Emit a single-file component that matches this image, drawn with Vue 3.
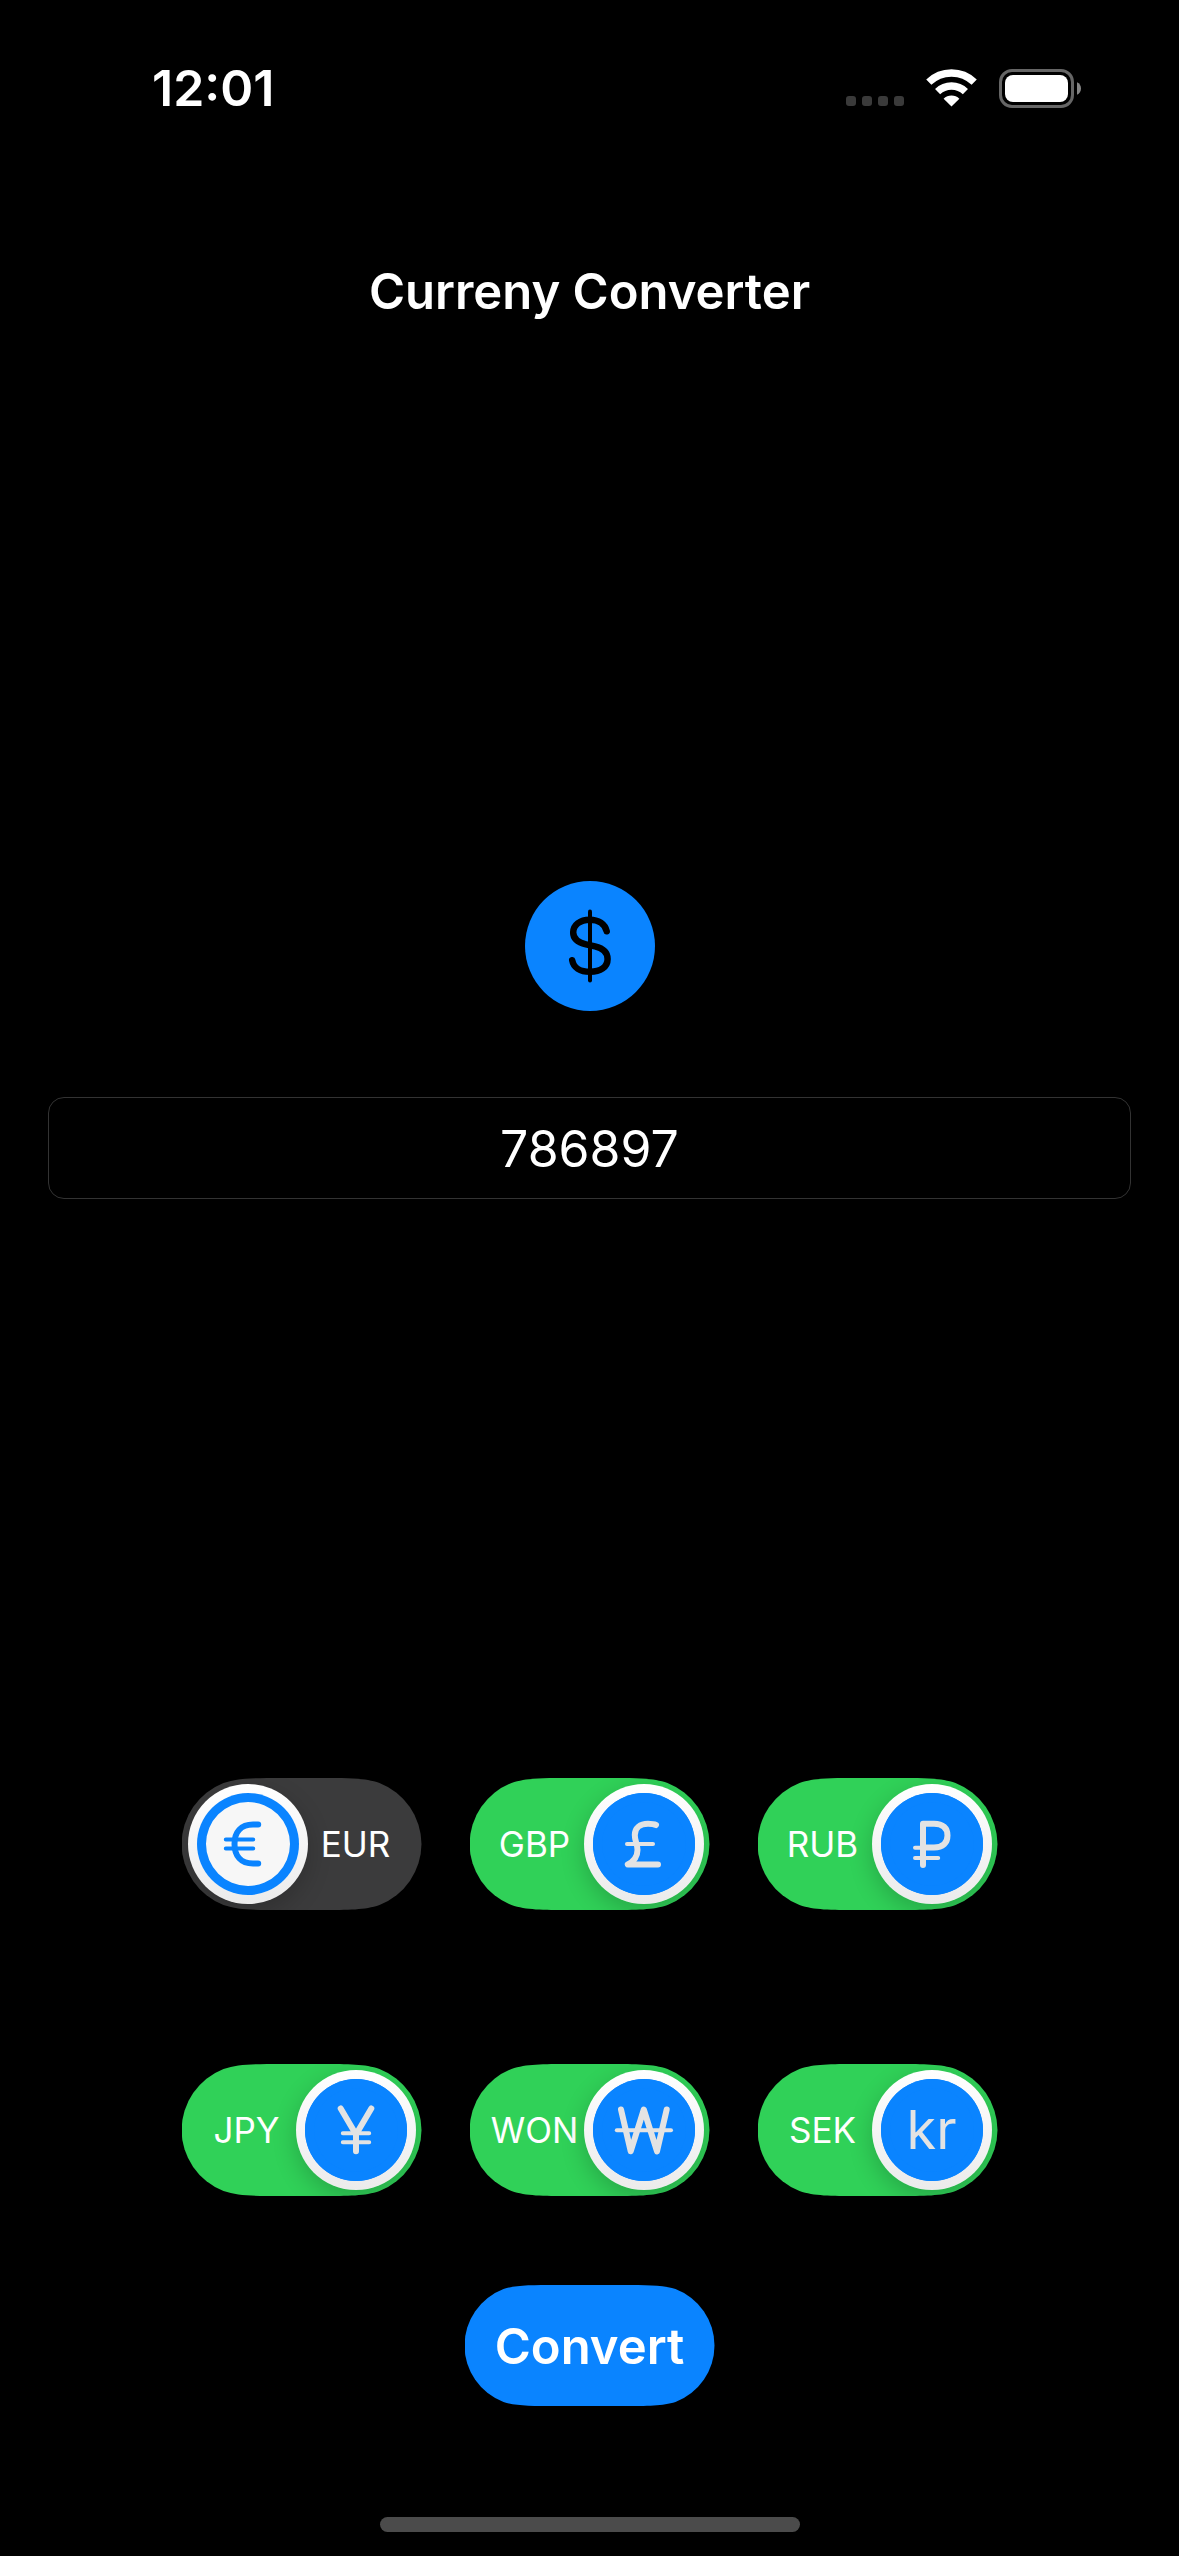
<script setup>
import { ref, reactive } from 'vue'

const amount = ref('786897')

const currencies = reactive([
  { code: 'EUR', on: false },
  { code: 'GBP', on: true },
  { code: 'RUB', on: true },
  { code: 'JPY', on: true },
  { code: 'WON', on: true },
  { code: 'SEK', on: true },
])
</script>

<template>
  <div class="screen">
    <header class="status">
      <time class="clock">12:01</time>
      <div class="indicators">
        <div class="signal"><i></i><i></i><i></i><i></i></div>
        <svg class="wifi" viewBox="0 0 51 38" aria-hidden="true">
          <g fill="none" stroke="#fff" stroke-width="7.4">
            <path d="M2.8 13.2A32.6 32.6 0 0 1 48.2 13.2" />
            <path d="M11.6 22.6A20 20 0 0 1 39.4 22.6" />
          </g>
          <path fill="#fff" d="M17.6 29.8A11.4 11.4 0 0 1 33.4 29.8L25.5 37.6Z" />
        </svg>
        <svg class="battery" viewBox="0 0 82 39" aria-hidden="true">
          <rect x="1.5" y="1.5" width="72" height="36" rx="11.5" fill="none" stroke="#666" stroke-width="3" />
          <rect x="6" y="6" width="63" height="27" rx="8" fill="#fff" />
          <path d="M78 13.2C80.600 14.400 82 16.800 82 19.500S80.600 24.600 78 25.800Z" fill="#858585" />
        </svg>
      </div>
    </header>

    <h1 class="title">Curreny Converter</h1>

    <main class="content">
      <section class="source">
        <svg class="dollar" viewBox="0 0 130 130" role="img" aria-label="US dollar">
          <circle cx="65" cy="65" r="65" fill="#0a84ff" />
          <g fill="none" stroke="#000" stroke-linecap="round">
            <path stroke-width="4" d="M65 30.500V99.500" />
            <path
              stroke-width="6.500"
              d="M81.700 50.300C80 43 73.500 38.700 64.700 38.700C55 38.700 48.200 44 48.200 51.500C48.200 58 53 61.500 61 63.400L70 65.400C78.500 67.400 82.600 71.500 82.600 78C82.600 86 75.500 90.800 65 90.800C55 90.800 48.500 86.500 47.200 79.200"
            />
          </g>
        </svg>
        <input v-model="amount" class="amount" type="text" inputmode="decimal" aria-label="Amount" />
      </section>

      <section class="targets">
        <label v-for="c in currencies" :key="c.code" class="switch" :class="{ on: c.on }">
          <input v-model="c.on" class="check" type="checkbox" />
          <span class="code">{{ c.code }}</span>
          <span class="knob">
            <span class="face">
              <span v-if="c.code === 'SEK'" class="krona">kr</span>
              <svg v-else class="sign" viewBox="9 9 102 102" aria-hidden="true">
                <template v-if="c.code === 'EUR'">
                  <path class="bold" d="M70.200 40.500H65C53 40.500 46.500 48 46.500 60S53 79.500 65 79.500H70.200" />
                  <path class="bar" d="M37.800 55.500H65.200M37.800 64.500H65.200" />
                </template>
                <template v-else-if="c.code === 'GBP'">
                  <path
                    class="bold"
                    d="M72 41C70 40 67 39.800 64 39.800C56 39.800 50.800 44 50.800 51C50.800 57 53.500 60 53.500 66C53.500 73 49.500 77.500 43.800 80.500H74"
                  />
                  <path class="bar" d="M43 60H69" />
                </template>
                <template v-else-if="c.code === 'RUB'">
                  <path class="bold" d="M51 81V39.800H62C71 39.800 75.500 44 75.500 51.500S71 63.500 62 63.500H51" />
                  <path class="bar" d="M43 63.800H62M43 74H66.200" />
                </template>
                <template v-else-if="c.code === 'JPY'">
                  <path class="bold" d="M44.700 38.500L60 64.500L75.300 38.500M60 64V81.300" />
                  <path class="bar" d="M46.800 63.200H73.200M46.800 72.200H73.200" />
                </template>
                <template v-else>
                  <path class="bold" d="M37 39.500L46.700 81.300L59.800 39.500L73 81.300L82.700 39.500" />
                  <path class="bar" d="M32.800 60.300H87" />
                </template>
              </svg>
            </span>
          </span>
        </label>
      </section>
    </main>

    <footer class="actions">
      <button class="convert" type="button">Convert</button>
      <div class="home"></div>
    </footer>
  </div>
</template>

<style>
body {
  background: #000;
}
</style>

<style scoped>
.screen {
  box-sizing: border-box;
  min-height: 100vh;
  display: flex;
  flex-direction: column;
  padding-bottom: 24px;
  background: #000;
  color: #fff;
  font-family: Inter, "Liberation Sans", sans-serif;
  font-size: 50px;
  line-height: 60px;
}

.status {
  display: flex;
  align-items: center;
  justify-content: space-between;
  padding: 58px 98px 0 152px;
}

.clock {
  font-weight: 600;
}

.indicators {
  display: flex;
  align-items: center;
  gap: 22px;
}

.signal {
  display: flex;
  gap: 6px;
  padding-top: 26px;
}

.signal i {
  width: 10px;
  height: 10px;
  border-radius: 3px;
  background: #3a3a3a;
}

.wifi {
  width: 51px;
  height: 38px;
}

.battery {
  width: 82px;
  height: 39px;
}

.title {
  margin: 144px 0 0;
  font-size: 49px;
  font-weight: 600;
  text-align: center;
}

.content {
  flex: 1;
  display: flex;
  flex-direction: column;
}

.source {
  margin: auto 0;
  padding: 0 48px 20px;
  display: flex;
  flex-direction: column;
  align-items: center;
  gap: 86px;
}

.dollar {
  width: 130px;
  height: 130px;
}

.amount {
  box-sizing: border-box;
  width: 100%;
  height: 102px;
  padding: 2px 20px 0;
  border: 1px solid #333;
  border-radius: 16px;
  outline: none;
  background: #000;
  color: #fff;
  font: inherit;
  text-align: center;
}

.targets {
  display: grid;
  grid-template-columns: repeat(3, 240px);
  justify-content: center;
  gap: 154px 48px;
}

.switch {
  position: relative;
  box-sizing: border-box;
  height: 132px;
  padding: 6px;
  display: flex;
  flex-direction: row-reverse;
  align-items: center;
  background: #3b3b3c;
  clip-path: path("M101 0H139C168 0 183 0 198 5A66 66 0 0 1 240 66A66 66 0 0 1 198 127C183 132 168 132 139 132H101C72 132 57 132 42 127A66 66 0 0 1 0 66A66 66 0 0 1 42 5C57 0 72 0 101 0Z");
  cursor: pointer;
}

.switch.on {
  flex-direction: row;
  background: #30d158;
}

.check {
  position: absolute;
  inset: 0;
  width: 100%;
  height: 100%;
  margin: 0;
  opacity: 0;
}

.code {
  flex: 1;
  padding-right: 12px;
  font-size: 35px;
  line-height: 42px;
  text-align: center;
}

.on .code {
  padding: 0 0 0 10px;
}

.knob {
  box-sizing: border-box;
  width: 120px;
  height: 120px;
  padding: 9px;
  border-radius: 50%;
  background: linear-gradient(#fff, #ebebeb);
  box-shadow: 0 8px 24px rgba(0, 0, 0, 0.2);
}

.face {
  width: 102px;
  height: 102px;
  display: flex;
  align-items: center;
  justify-content: center;
  border-radius: 50%;
  background: #f7f7f7;
  box-shadow: inset 0 0 0 9px #0a84ff;
  color: #0a84ff;
}

.on .face {
  background: #0a84ff;
  color: #e3e3e3;
}

.sign {
  width: 102px;
  height: 102px;
  fill: none;
  stroke: currentColor;
  stroke-linecap: round;
  stroke-linejoin: round;
}

.bold {
  stroke-width: 6px;
}

.bar {
  stroke-width: 4px;
}

.krona {
  font-size: 54px;
  line-height: 60px;
}

.actions {
  display: flex;
  flex-direction: column;
  align-items: center;
  gap: 111px;
  padding-top: 89px;
}

.convert {
  width: 250px;
  height: 121px;
  padding: 2px 0 0;
  border: 0;
  background: #0a84ff;
  clip-path: path("M93 0H157C184 0 198 0 211 4A60.500 60.500 0 0 1 250 60.500A60.500 60.500 0 0 1 211 117C198 121 184 121 157 121H93C66 121 52 121 39 117A60.500 60.500 0 0 1 0 60.500A60.500 60.500 0 0 1 39 4C52 0 66 0 93 0Z");
  color: #fff;
  font: inherit;
  font-size: 49px;
  font-weight: 600;
  cursor: pointer;
}

.home {
  width: 420px;
  max-width: 60%;
  height: 15px;
  border-radius: 8px;
  background: #4b4b4b;
}
</style>
